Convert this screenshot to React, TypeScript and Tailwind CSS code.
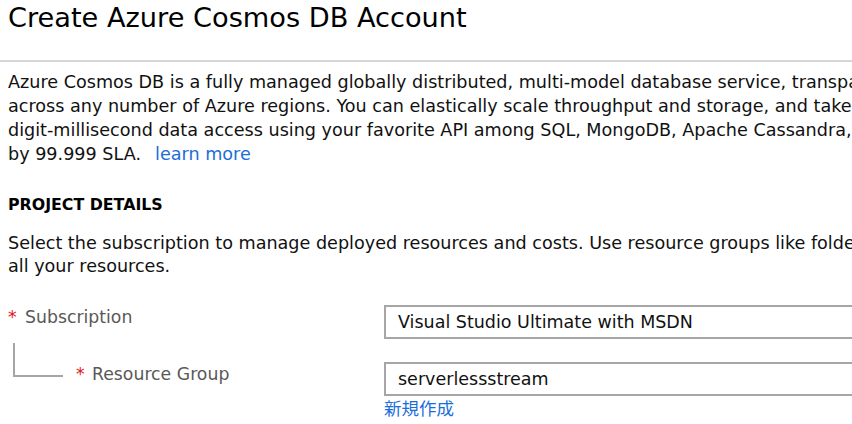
import React from 'react'

const FONT = { fontFamily: '"DejaVu Sans", "Noto Sans CJK JP", sans-serif' }

export default function App() {
  return (
    <div className="w-[852px] h-[424px] overflow-hidden bg-white text-[#111]" style={FONT}>
      <div className="px-2 whitespace-nowrap">
        <h1 className="text-[27.2px] leading-[36px] font-normal text-black">Create Azure Cosmos DB Account</h1>
      </div>
      <div className="mt-[24px] h-[2px] w-[1000px] bg-[#d6d6d6]" />

      <div className="px-2 mt-[8px] text-[17.6px] leading-[24px] whitespace-nowrap text-[#111]">
        <div>Azure Cosmos DB is a fully managed globally distributed, multi-model database service, transparently</div>
        <div>across any number of Azure regions. You can elastically scale throughput and storage, and take advantage</div>
        <div>digit-millisecond data access using your favorite API among SQL, MongoDB, Apache Cassandra, Tables</div>
        <div>
          by 99.999 SLA.<a className="ml-[14px] text-[#1b6ed9]">learn more</a>
        </div>

        <div className="mt-[27px] text-[15.8px] font-bold text-black">PROJECT DETAILS</div>

        <div className="mt-[15px] leading-[23px]">
          <div>Select the subscription to manage deployed resources and costs. Use resource groups like folders</div>
          <div>all your resources.</div>
        </div>
      </div>

      <div className="px-2 mt-[27px] flex items-start">
        <div className="w-[376px] shrink-0 flex text-[17.3px] leading-[24px] text-[#595959]">
          <span className="text-[#e81123] w-[17px]">*</span>
          <span>Subscription</span>
        </div>
        <div className="w-[520px] h-[34px] border-2 border-[#a6a6a6] px-3 text-[17.5px] leading-[30px] text-[#111] whitespace-nowrap shrink-0">
          Visual Studio Ultimate with MSDN
        </div>
      </div>

      <div className="px-2 mt-[23px] flex items-start">
        <div className="w-[376px] shrink-0 flex items-start text-[17.3px] leading-[24px] text-[#595959]">
          <div className="ml-[5px] -mt-[19px] w-[50px] h-[34px] border-l-2 border-b-2 border-[#a6a6a6]" />
          <span className="ml-[13px] text-[#e81123] w-[16px]">*</span>
          <span>Resource Group</span>
        </div>
        <div className="shrink-0">
          <div className="w-[520px] h-[34px] border-2 border-[#a6a6a6] px-3 text-[17.5px] leading-[30px] text-[#111] whitespace-nowrap">
            serverlessstream
          </div>
          <a className="block mt-[2px] text-[17.5px] leading-[22px] text-[#1b6ed9]">新規作成</a>
        </div>
      </div>
    </div>
  )
}
